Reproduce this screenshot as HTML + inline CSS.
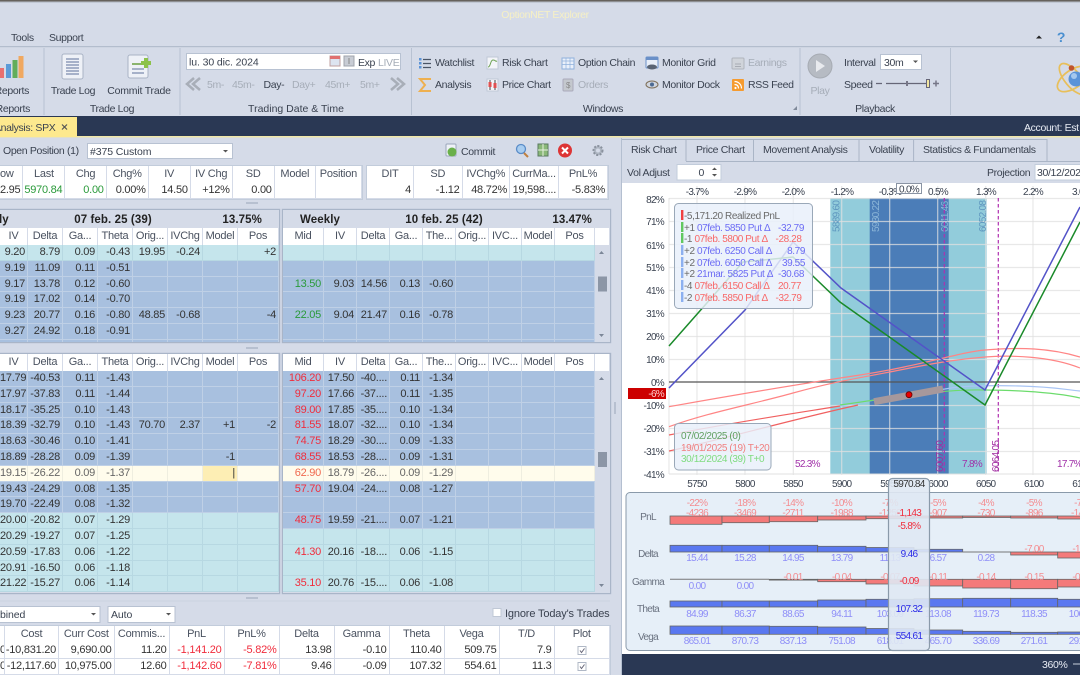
<!DOCTYPE html>
<html><head><meta charset="utf-8"><title>OptionNET Explorer</title>
<style>
html,body{margin:0;padding:0;background:#d5dbe8;overflow:hidden}
#a{position:relative;width:1080px;height:675px;overflow:hidden;background:#d5dbe8;font:11px "Liberation Sans",sans-serif;color:#333;letter-spacing:-.25px;filter:blur(.3px)}
#a svg.o{position:absolute;left:0;top:0}
svg text{font-family:"Liberation Sans",sans-serif;font-size:10.5px;fill:#3a4250;letter-spacing:-.35px}
svg .lg text{font-size:10px;letter-spacing:-.4px}
svg .lg2 text{font-size:10px;letter-spacing:-.7px}
.m{text-anchor:middle}.e{text-anchor:end}
.gy{fill:#a6adb8}.bd{font-weight:bold;fill:#222;font-size:11.5px;letter-spacing:.1px}
.p{position:absolute;background:#d5dbe8;box-shadow:0 0 0 1.2px #a9b5c8;overflow:hidden}
.r{display:grid;height:15.8px;box-sizing:border-box;border-bottom:1px solid #bfd0e6;color:#333}
.r p,.h p{margin:0;text-align:right;padding-right:2px;line-height:15px;height:100%;border-right:1px solid #bfd0e6;white-space:nowrap;overflow:hidden}
.h{display:grid;height:17px;background:#fff}
.h p{text-align:center;padding:0;line-height:17px;color:#4a5260;border-right:1px solid #d5dbe8}
.L .r,.L .h{grid-template-columns:28px 35px 35px 35px 35px 35px 35px 41px}
.R .r,.R .h{grid-template-columns:41px 33px 33px 33px 33px 33px 33px 33px 40px;width:312px}
.b{background:#a8c0df}.c{background:#c5e5ec}.y{background:#fffcec;color:#666}
.y p{border-color:#efeee0}.c p{border-color:#b7d8e2}.c{border-color:#b7d8e2}
.g{color:#2a9a3a}.d{color:#f02c3c}
.T{position:absolute;background:#fff;box-shadow:0 0 0 1px #c2ccdb}
.T .h p{border-right:1px solid #d5dbe8}
.T .r{height:16px;background:#fff;border-bottom:1px solid #d5dbe8;font-size:11px}
.T .r p{border-color:#d5dbe8;line-height:15px}
</style></head><body><div id="a">

<!-- top summary tables -->
<div class="T" style="left:0;top:166px;width:362px;height:33px"><div class="h" style="grid-template-columns:23.4px 42px 41.3px 42px 42px 42px 42px 41.2px 46px"><p style="text-align:left">ow<p>Last<p>Chg<p>Chg%<p>IV<p>IV Chg<p>SD<p>Model<p>Position</div>
<div class="r" style="grid-template-columns:23.4px 42px 41.3px 42px 42px 42px 42px 41.2px 46px"><p>2.95<p class="g">5970.84<p class="g">0.00<p>0.00%<p>14.50<p>+12%<p>0.00<p><p></div></div>
<div class="T" style="left:367px;top:166px;width:241px;height:33px"><div class="h" style="grid-template-columns:47px 48.5px 47.5px 49px 49px"><p>DIT<p>SD<p>IVChg%<p>CurrMa...<p>PnL%</div>
<div class="r" style="grid-template-columns:47px 48.5px 47.5px 49px 49px"><p>4<p>-1.12<p>48.72%<p>19,598....<p>-5.83%</div></div>

<!-- upper left grid -->
<div class="p L" style="left:0;top:210px;width:279px;height:132px"><div style="height:18px"></div>
<div class="h"><p>IV<p>Delta<p>Ga...<p>Theta<p>Orig...<p>IVChg<p>Model<p>Pos</div>
<div class="r c"><p>9.20<p>8.79<p>0.09<p>-0.43<p>19.95<p>-0.24<p><p>+2</div>
<div class="r b"><p>9.19<p>11.09<p>0.11<p>-0.51<p><p><p><p></div>
<div class="r b"><p>9.17<p>13.78<p>0.12<p>-0.60<p><p><p><p></div>
<div class="r b"><p>9.19<p>17.02<p>0.14<p>-0.70<p><p><p><p></div>
<div class="r b"><p>9.23<p>20.77<p>0.16<p>-0.80<p>48.85<p>-0.68<p><p>-4</div>
<div class="r b"><p>9.27<p>24.92<p>0.18<p>-0.91<p><p><p><p></div>
<div class="r b"><p><p><p><p><p><p><p><p></div></div>

<!-- upper right grid -->
<div class="p R" style="left:283px;top:210px;width:327px;height:132px"><div style="height:18px"></div>
<div class="h" style="width:327px;grid-template-columns:41px 33px 33px 33px 33px 33px 33px 33px 40px 15px"><p>Mid<p>IV<p>Delta<p>Ga...<p>The...<p>Orig...<p>IVC...<p>Model<p>Pos<p></div>
<div class="r c"><p><p><p><p><p><p><p><p><p></div>
<div class="r b"><p><p><p><p><p><p><p><p><p></div>
<div class="r b"><p class="g">13.50<p>9.03<p>14.56<p>0.13<p>-0.60<p><p><p><p></div>
<div class="r b"><p><p><p><p><p><p><p><p><p></div>
<div class="r b"><p class="g">22.05<p>9.04<p>21.47<p>0.16<p>-0.78<p><p><p><p></div>
<div class="r b"><p><p><p><p><p><p><p><p><p></div>
<div class="r b"><p><p><p><p><p><p><p><p><p></div></div>

<!-- lower left grid -->
<div class="p L" style="left:0;top:354px;width:279px;height:238.5px">
<div class="h"><p>IV<p>Delta<p>Ga...<p>Theta<p>Orig...<p>IVChg<p>Model<p>Pos</div>
<div class="r b"><p>17.79<p>-40.53<p>0.11<p>-1.43<p><p><p><p></div>
<div class="r b"><p>17.97<p>-37.83<p>0.11<p>-1.44<p><p><p><p></div>
<div class="r b"><p>18.17<p>-35.25<p>0.10<p>-1.43<p><p><p><p></div>
<div class="r b"><p>18.39<p>-32.79<p>0.10<p>-1.43<p>70.70<p>2.37<p>+1<p>-2</div>
<div class="r b"><p>18.63<p>-30.46<p>0.10<p>-1.41<p><p><p><p></div>
<div class="r b"><p>18.89<p>-28.28<p>0.09<p>-1.39<p><p><p>-1<p></div>
<div class="r y"><p>19.15<p>-26.22<p>0.09<p>-1.37<p><p><p style="background:#fdeeb4;color:#333">|<p></div>
<div class="r b"><p>19.43<p>-24.29<p>0.08<p>-1.35<p><p><p><p></div>
<div class="r b"><p>19.70<p>-22.49<p>0.08<p>-1.32<p><p><p><p></div>
<div class="r c"><p>20.00<p>-20.82<p>0.07<p>-1.29<p><p><p><p></div>
<div class="r c"><p>20.29<p>-19.27<p>0.07<p>-1.25<p><p><p><p></div>
<div class="r c"><p>20.59<p>-17.83<p>0.06<p>-1.22<p><p><p><p></div>
<div class="r c"><p>20.91<p>-16.50<p>0.06<p>-1.18<p><p><p><p></div>
<div class="r c"><p>21.22<p>-15.27<p>0.06<p>-1.14<p><p><p><p></div></div>

<!-- lower right grid -->
<div class="p R" style="left:283px;top:354px;width:327px;height:238.5px">
<div class="h" style="width:327px;grid-template-columns:41px 33px 33px 33px 33px 33px 33px 33px 40px 15px"><p>Mid<p>IV<p>Delta<p>Ga...<p>The...<p>Orig...<p>IVC...<p>Model<p>Pos<p></div>
<div class="r b"><p class="d">106.20<p>17.50<p>-40....<p>0.11<p>-1.34<p><p><p><p></div>
<div class="r b"><p class="d">97.20<p>17.66<p>-37....<p>0.11<p>-1.35<p><p><p><p></div>
<div class="r b"><p class="d">89.00<p>17.85<p>-35....<p>0.10<p>-1.34<p><p><p><p></div>
<div class="r b"><p class="d">81.55<p>18.07<p>-32....<p>0.10<p>-1.34<p><p><p><p></div>
<div class="r b"><p class="d">74.75<p>18.29<p>-30....<p>0.09<p>-1.33<p><p><p><p></div>
<div class="r b"><p class="d">68.55<p>18.53<p>-28....<p>0.09<p>-1.31<p><p><p><p></div>
<div class="r y"><p style="color:#f06a50">62.90<p>18.79<p>-26....<p>0.09<p>-1.29<p><p><p><p></div>
<div class="r b"><p class="d">57.70<p>19.04<p>-24....<p>0.08<p>-1.27<p><p><p><p></div>
<div class="r b"><p><p><p><p><p><p><p><p><p></div>
<div class="r b"><p class="d">48.75<p>19.59<p>-21....<p>0.07<p>-1.21<p><p><p><p></div>
<div class="r c"><p><p><p><p><p><p><p><p><p></div>
<div class="r c"><p class="d">41.30<p>20.16<p>-18....<p>0.06<p>-1.15<p><p><p><p></div>
<div class="r c"><p><p><p><p><p><p><p><p><p></div>
<div class="r c"><p class="d">35.10<p>20.76<p>-15....<p>0.06<p>-1.08<p><p><p><p></div></div>

<!-- bottom table -->
<div class="T" style="left:0;top:625.5px;width:610px;height:50px">
<div class="h" style="height:17.5px;grid-template-columns:5px 54px 55.5px 55px 55px 55px 55px 55px 55px 55px 55px 55.5px"><p><p>Cost<p>Curr Cost<p>Commis...<p>PnL<p>PnL%<p>Delta<p>Gamma<p>Theta<p>Vega<p>T/D<p>Plot</div>
<div class="r" style="grid-template-columns:5px 54px 55.5px 55px 55px 55px 55px 55px 55px 55px 55px 55.5px"><p style="padding:0">0<p>-10,831.20<p>9,690.00<p>11.20<p class="d">-1,141.20<p class="d">-5.82%<p>13.98<p>-0.10<p>110.40<p>509.75<p>7.9<p></div>
<div class="r" style="grid-template-columns:5px 54px 55.5px 55px 55px 55px 55px 55px 55px 55px 55px 55.5px"><p style="padding:0">0<p>-12,117.60<p>10,975.00<p>12.60<p class="d">-1,142.60<p class="d">-7.81%<p>9.46<p>-0.09<p>107.32<p>554.61<p>11.3<p></div></div>

<svg class="o" width="1080" height="675" viewBox="0 0 1080 675">
<!-- top strip -->
<rect width="1080" height="1.6" fill="#66625c"/><rect y="1.6" width="1080" height="1" fill="#b4bbc8"/>
<text x="545" y="18" class="m" style="fill:#f6f0c4">OptionNET Explorer</text>
<text x="11" y="41">Tools</text><text x="49" y="41">Support</text>
<path d="M1036 38.5h6l-3-3z" fill="#222"/>
<text x="1061" y="42" class="m" style="fill:#4a8fd0;font-weight:bold;font-size:14px">?</text>
<rect y="46" width="1080" height="1.2" fill="#b3bdcd"/>
<g stroke="#b8c2d2"><path d="M44 48v67M180 48v67M411.5 48v67M800 48v67M950.5 48v67"/></g>

<!-- reports icon -->
<rect x="0" y="68" width="4" height="10" fill="#e87070"/><rect x="6" y="64" width="5" height="14" fill="#5b9bd8"/><rect x="12.500" y="60" width="5" height="18" fill="#62ad5a"/><rect x="18.500" y="56" width="5" height="22" fill="#f0a860"/>
<text x="29" y="94" class="e">Reports</text><text x="30" y="112" class="e">Reports</text>
<!-- trade log icon -->
<rect x="62" y="54" width="21" height="25" rx="2" fill="#eef1f7" stroke="#a9b3c5"/><path d="M66 59h13M66 62h13M66 65h13M66 68h13M66 71h13M66 74h13" stroke="#a6b1c9" stroke-width="2"/>
<text x="73" y="94" class="m">Trade Log</text>
<rect x="128" y="55" width="20" height="23" rx="2" fill="#eef1f7" stroke="#a9b3c5"/><path d="M132 64h11" stroke="#6aa040" stroke-width="1.5"/><path d="M132 69h12M132 73h12" stroke="#a6b1c9" stroke-width="2"/><path d="M146 58v10M141 63h10" stroke="#8cc24a" stroke-width="4"/>
<text x="139" y="94" class="m" style="letter-spacing:-.2px">Commit Trade</text>
<text x="112" y="112" class="m">Trade Log</text>

<!-- date row -->
<rect x="186.500" y="53.500" width="214" height="16" fill="#fff" stroke="#b8c2d2"/>
<text x="189" y="65.500" style="letter-spacing:-.1px">lu. 30 dic. 2024</text>
<rect x="330" y="56" width="10" height="10" fill="#dde4f0" stroke="#c0a0a0"/><rect x="330" y="56" width="10" height="3" fill="#e07070"/>
<rect x="344" y="56" width="10" height="10" fill="#c8ccd4" stroke="#a0a4ac"/><path d="M349 58v6" stroke="#888"/>
<text x="358" y="66">Exp</text><text x="378" y="66" class="gy">LIVE</text>
<path d="M200 78l-7 6 7 6M194 78l-7 6 7 6" fill="none" stroke="#a8aeb8" stroke-width="2.500"/>
<path d="M391 78l7 6-7 6M397 78l7 6-7 6" fill="none" stroke="#a8aeb8" stroke-width="2.500"/>
<text x="207" y="88" class="gy">5m-</text><text x="232" y="88" class="gy">45m-</text><text x="263.500" y="88">Day-</text><text x="292" y="88" class="gy">Day+</text><text x="325" y="88" class="gy">45m+</text><text x="360" y="88" class="gy">5m+</text>
<text x="296" y="112" class="m" style="letter-spacing:0">Trading Date &amp; Time</text>

<!-- windows -->
<g fill="#5b93d6"><rect x="419" y="58" width="2.500" height="2.500"/><rect x="419" y="62" width="2.500" height="2.500"/><rect x="419" y="66" width="2.500" height="2.500"/></g><path d="M423 59.500h8M423 63.500h8M423 67.500h8" stroke="#4a5566" stroke-width="1.300"/>
<text x="435" y="66">Watchlist</text>
<path d="M431 79h-11l5 6-5 6h11" fill="none" stroke="#eeb050" stroke-width="2"/>
<text x="435" y="88">Analysis</text>
<rect x="487" y="57" width="11" height="12" fill="#f3f5f9" stroke="#c0c8d6"/><path d="M488 67c3 0 2-7 5-7s2 2 4 1" fill="none" stroke="#6aa050"/>
<text x="502" y="66">Risk Chart</text>
<rect x="487" y="79" width="11" height="12" fill="#f3f5f9" stroke="#c0c8d6"/><path d="M490 80v10M495 80v10" stroke="#444"/><rect x="488.500" y="82" width="3" height="5" fill="#e05050"/><rect x="493.500" y="83" width="3" height="5" fill="#e05050"/>
<text x="502" y="88">Price Chart</text>
<rect x="562" y="58" width="12" height="11" fill="#eaf0fa" stroke="#8fb0dc"/><path d="M562 61h12M562 64.500h12M566 58v11M570 58v11" stroke="#8fb0dc" stroke-width=".7"/>
<text x="578" y="66">Option Chain</text>
<rect x="563" y="79" width="10" height="12" rx="1" fill="#c4c8ce" stroke="#aab"/><text x="568" y="88" class="m" style="font-size:8px;fill:#888">$</text>
<text x="578" y="88" class="gy">Orders</text>
<rect x="646" y="57" width="12" height="11" rx="1" fill="#e8eef8" stroke="#6a90c8"/><rect x="646" y="57" width="12" height="3" fill="#6a90c8"/><ellipse cx="652" cy="67" rx="5" ry="2.500" fill="#5a6474"/>
<text x="662" y="66">Monitor Grid</text>
<ellipse cx="652" cy="84.500" rx="6" ry="3.500" fill="#cfd5df" stroke="#7c6c54"/><circle cx="652" cy="84.500" r="2" fill="#4c6a92"/>
<text x="662" y="88">Monitor Dock</text>
<rect x="732" y="58" width="12" height="11" rx="1" fill="#d0d4da" stroke="#b0b4bc"/><path d="M735 64h6M735 66.500h6" stroke="#a8acb4"/>
<text x="748" y="66" class="gy">Earnings</text>
<rect x="732" y="79" width="12" height="12" rx="1" fill="#f59b30"/><path d="M734.500 81.500c4 0 7 3 7 7M734.500 84.500c2.500 0 4 1.500 4 4" fill="none" stroke="#fff" stroke-width="1.200"/><circle cx="735.500" cy="88" r="1.100" fill="#fff"/>
<text x="748" y="88">RSS Feed</text>
<text x="603" y="112" class="m">Windows</text>
<path d="M793 110h4v-4z" fill="#808a9a"/>

<!-- playback -->
<circle cx="820" cy="66" r="12" fill="#b6bbc3" stroke="#a6abb3"/><path d="M816 60l9 6-9 6z" fill="#e8eaee"/>
<text x="820" y="94" class="m gy">Play</text>
<text x="844" y="66">Interval</text><rect x="880.500" y="54.500" width="41" height="15" fill="#fff" stroke="#b8c2d2"/><text x="884" y="66">30m</text><path d="M913 60.500h5l-2.500 2.500z" fill="#555"/>
<text x="844" y="88">Speed</text><path d="M876 83.500h6M886 83.500h41" stroke="#667" stroke-width="1.300"/><rect x="906" y="81" width="2" height="5" fill="#778"/><rect x="926.500" y="79.500" width="3" height="8" fill="#f2e6a0" stroke="#667"/><path d="M933 83.500h6M936 80.500v6" stroke="#778" stroke-width="1.500"/>
<text x="875" y="112" class="m">Playback</text>

<!-- atom logo -->
<g fill="none" stroke="#e8bf5a" stroke-width="1.700"><ellipse cx="1073" cy="79" rx="18" ry="9" transform="rotate(-35 1073 79)"/><ellipse cx="1073" cy="79" rx="19" ry="8" transform="rotate(50 1073 79)"/></g>
<circle cx="1076" cy="79" r="7.500" fill="#5a93d8"/><circle cx="1074" cy="76" r="3" fill="#a5c8ee"/><circle cx="1071.500" cy="68" r="2.800" fill="#c0542c"/>

<!-- dark bar -->
<rect y="116" width="1080" height="20" fill="#2a3854"/><rect y="136" width="1080" height="1.500" fill="#f0e6a8"/>
<rect x="0" y="117" width="77" height="20" fill="#fde98e"/>
<text x="-6" y="131">Analysis: SPX</text>
<path d="M62 124.500l5 5M67 124.500l-5 5" stroke="#555" stroke-width="1.200"/>
<text x="1024" y="131" style="fill:#e8ecf4">Account: Est</text>

<!-- left toolbar -->
<text x="3" y="154">Open Position (1)</text>
<rect x="87.500" y="143.500" width="145" height="15" fill="#fff" stroke="#b8c2d2"/><text x="90" y="155" style="letter-spacing:-.1px">#375 Custom</text><path d="M223 150h5l-2.500 2.500z" fill="#555"/>
<rect x="446" y="144" width="10" height="12" rx="1" fill="#eef1f7" stroke="#9aa6ba"/><circle cx="452" cy="152" r="4.500" fill="#6ab04a"/>
<text x="461" y="155">Commit</text>
<circle cx="521" cy="149" r="4.500" fill="#a8cdf0" stroke="#5a8cc8" stroke-width="1.300"/><path d="M524 153l4 4" stroke="#c08040" stroke-width="2"/>
<rect x="538" y="144" width="10" height="12" fill="#8ab878" stroke="#5a7a60"/><path d="M543 144v12M538 150h10" stroke="#e8f0e0"/>
<circle cx="565" cy="150.500" r="7" fill="#dd3535"/><path d="M562 147.500l6 6M568 147.500l-6 6" stroke="#fff" stroke-width="2"/>
<circle cx="598" cy="150.500" r="4.500" fill="#aeb6c2" stroke="#8a929e" stroke-width="2" stroke-dasharray="2 1.400"/><circle cx="598" cy="150.500" r="2" fill="#d5dbe8"/>

<!-- grid titles -->
<text x="-1" y="223" class="bd">ly</text><text x="113" y="223" class="bd m">07 feb. 25 (39)</text><text x="262" y="223" class="bd e">13.75%</text>
<text x="300" y="223" class="bd">Weekly</text><text x="444" y="223" class="bd m">10 feb. 25 (42)</text><text x="592" y="223" class="bd e">13.47%</text>
<!-- scrollbars -->
<path d="M599 254h5l-2.500-3z M599 334h5l-2.500 3z M599 380h5l-2.500-3z M599 584h5l-2.500 3z" fill="#7c8798"/>
<rect x="598" y="276.500" width="9" height="15" fill="#8c96a6"/><rect x="598" y="452" width="9" height="15" fill="#8c96a6"/>
<g fill="#a4aec0"><rect x="246" y="202" width="12" height="2" opacity=".6"/><rect x="246" y="347" width="12" height="2" opacity=".6"/><rect x="246" y="597" width="12" height="2" opacity=".6"/><rect x="614" y="402" width="2" height="12" opacity=".6"/></g>
<rect x="0" y="600.500" width="610" height="1" fill="#ccd3e0"/>

<!-- bottom toolbar -->
<rect x="-2" y="606.500" width="102" height="16" fill="#fff" stroke="#b8c2d2"/><text x="0" y="618" style="letter-spacing:-.1px">bined</text><path d="M91 613h5l-2.500 2.500z" fill="#555"/>
<rect x="108" y="606.500" width="67" height="16" fill="#fff" stroke="#b8c2d2"/><text x="111" y="618" style="letter-spacing:-.1px">Auto</text><path d="M166 613h5l-2.500 2.500z" fill="#555"/>
<rect x="493" y="608.500" width="8" height="8" fill="#fff" stroke="#c0c8d6"/><text x="505" y="617" style="font-size:11px;letter-spacing:-.15px">Ignore Today's Trades</text>
<rect x="578" y="646.500" width="8" height="8" fill="#fff" stroke="#b0b8c6"/><path d="M580 650.500l1.500 2 3-4" fill="none" stroke="#667"/>
<rect x="578" y="662.500" width="8" height="8" fill="#fff" stroke="#b0b8c6"/><path d="M580 666.500l1.500 2 3-4" fill="none" stroke="#667"/>

<!-- right tabs -->
<rect x="621" y="138" width="459" height="45" fill="#d5dbe8"/><path d="M621.500 138v537" stroke="#b4bfd0"/>
<path d="M622 139.500h64V161M686 139.500h67.500V161M753.500 139.500h105.500V161M859 139.500h54.600V161M913.600 139.500h133.400V161M686 161.500h394" fill="none" stroke="#aab5c6"/>
<text x="631" y="153">Risk Chart</text><text x="696" y="153">Price Chart</text><text x="763" y="153">Movement Analysis</text><text x="869" y="153">Volatility</text><text x="923" y="153">Statistics &amp; Fundamentals</text>
<text x="627" y="176">Vol Adjust</text><rect x="677" y="164.500" width="44" height="15.500" fill="#fff" stroke="#c2ccdb"/><text x="704" y="176" class="e">0</text><path d="M712 170h5l-2.500-2.500zM712 174h5l-2.500 2.500z" fill="#555"/>
<text x="987" y="176">Projection</text><rect x="1035" y="164.500" width="50" height="15.500" fill="#fff" stroke="#c2ccdb"/><text x="1037" y="176">30/12/202</text>

<!-- chart bg -->
<rect x="622" y="183" width="458" height="471" fill="#fff"/>
<rect x="830.300" y="198" width="156.400" height="276" fill="#92ccdb"/>
<rect x="869.700" y="198" width="79" height="276" fill="#4b7db8"/>
<g stroke="#e0e0e0" stroke-opacity=".75" stroke-width="1.200"><path d="M669 198.500h411M669 221.500h411M669 244.500h411M669 267.500h411M669 290.500h411M669 313.500h411M669 336.500h411M669 359.500h411M669 405.500h411M669 428.500h411M669 451.500h411M669 474h411"/><path d="M697 186v289M745 186v289M793.300 186v289M841.700 186v289M889.700 186v289M937.700 186v289M985.700 186v289M1033 186v289"/><path d="M669 198v276"/></g>
<g class="lg2"><text x="664" y="203" class="e">82%</text><text x="664" y="225" class="e">71%</text><text x="664" y="249" class="e">61%</text><text x="664" y="271" class="e">51%</text><text x="664" y="294" class="e">41%</text><text x="664" y="317" class="e">31%</text><text x="664" y="340" class="e">20%</text><text x="664" y="363" class="e">10%</text><text x="664" y="386" class="e">0%</text><text x="664" y="409" class="e">-10%</text><text x="664" y="432" class="e">-20%</text><text x="664" y="455" class="e">-31%</text><text x="664" y="478" class="e">-41%</text></g>
<rect x="628" y="388" width="38" height="11" fill="#cc0000"/><g class="lg2"><text x="664" y="397" class="e" style="fill:#ffd0d0">-6%</text>
<text x="697" y="195" class="m">-3.7%</text><text x="745" y="195" class="m">-2.9%</text><text x="793" y="195" class="m">-2.0%</text><text x="842" y="195" class="m">-1.2%</text><text x="890" y="195" class="m">-0.3%</text><text x="938" y="195" class="m">0.5%</text><text x="986" y="195" class="m">1.3%</text><text x="1033" y="195" class="m">2.2%</text><text x="1082" y="195" class="m">3.0%</text></g>
<rect x="896.500" y="183.500" width="25" height="10" fill="#fff" stroke="#8a94a4"/><g class="lg2"><text x="909" y="192.500" class="m">0.0%</text>
<text transform="translate(839.500,232) rotate(-90)" style="fill:#5f97bf">5889.60</text><text transform="translate(879,232) rotate(-90)" style="fill:#8cb6d8">5930.22</text><text transform="translate(948,232) rotate(-90)" style="fill:#8cb6d8">6011.46</text><text transform="translate(986,232) rotate(-90)" style="fill:#5f97bf">6052.08</text></g>
<!-- curves -->
<path d="M669 382H1080" stroke="#555" stroke-width="1.200"/>
<path d="M944.300 198V474M998.300 198V474" stroke="#b030b0" stroke-width="1.200" stroke-dasharray="3.500 2.500"/>
<g class="lg2"><text transform="translate(943,472) rotate(-90)" style="fill:#a02ca0">6007.60</text><text transform="translate(999,472) rotate(-90)" style="fill:#a02ca0">6064.05</text></g>
<g fill="none" stroke-width="1.200"><path d="M669 406.700C740 394 800 384 860 375S960 352 985 350C1020 347 1050 348 1080 357" stroke="#ff8585"/><path d="M669 426.700C710 412 750 405 793 393S860 378 900 370S960 359 985 357C1010 355 1050 356 1080 368" stroke="#ff8585"/><path d="M669 435C730 423 790 414 840 406" stroke="#f06060"/><path d="M669 451C720 440 790 420 858 405" stroke="#f06060"/><path d="M840 406C880 399 920 392 945 389C960 386 985 385 1020 386S1060 389 1080 391" stroke="#a8c4f4"/><path d="M840 405C870 401 910 394 940 391.700S970 390 985 390S1050 391 1080 398" stroke="#6cdc6c"/></g>
<path d="M874 401.700L943 389" stroke="#a6989c" stroke-width="7" fill="none"/>
<path d="M669 388L745 310L793 242L841 288L985 390L1080 207" fill="none" stroke="#5353c8" stroke-width="1.500"/>
<path d="M669 346L743 262L793 257L840 302L985 405L1080 222" fill="none" stroke="#1a8a2a" stroke-width="1.500"/>
<circle cx="909" cy="394.700" r="3" fill="#e80000" stroke="#600" stroke-width=".8"/>
<g class="lg2"><text x="795" y="467" style="fill:#a030a8">52.3%</text><text x="962" y="467" style="fill:#a030a8">7.8%</text><text x="1057" y="467" style="fill:#a030a8">17.7%</text></g>
<!-- legend -->
<rect x="674.500" y="203.500" width="138" height="105" rx="4" fill="#e8f0fa" fill-opacity=".84" stroke="#9aa8b8"/>
<g><rect x="681" y="210" width="2.400" height="10" fill="#f04040"/><rect x="681" y="222" width="2.400" height="10" fill="#60c860"/><rect x="681" y="233" width="2.400" height="10" fill="#60c860"/><rect x="681" y="245" width="2.400" height="10" fill="#8cb0f0"/><rect x="681" y="257" width="2.400" height="10" fill="#8cb0f0"/><rect x="681" y="268" width="2.400" height="10" fill="#8cb0f0"/><rect x="681" y="280" width="2.400" height="10" fill="#8cb0f0"/><rect x="681" y="292" width="2.400" height="10" fill="#8cb0f0"/></g>
<g class="lg"><text x="684" y="219" style="fill:#6a6a6a">-5,171.20 Realized PnL</text>
<text x="684" y="231" style="fill:#6a6a6a">+1 <tspan style="fill:#6c6cf4">07feb. 5850 Put Δ</tspan></text><text x="804" y="231" class="e" style="fill:#6c6cf4">-32.79</text>
<text x="684" y="242" style="fill:#6a6a6a">-1 <tspan style="fill:#f86868">07feb. 5800 Put Δ</tspan></text><text x="801.500" y="242" class="e" style="fill:#f86868">-28.28</text>
<text x="684" y="254" style="fill:#6a6a6a">+2 <tspan style="fill:#6c6cf4">07feb. 6250 Call Δ</tspan></text><text x="805" y="254" class="e" style="fill:#6c6cf4">8.79</text>
<text x="684" y="266" style="fill:#6a6a6a">+2 <tspan style="fill:#6c6cf4">07feb. 6050 Call Δ</tspan></text><text x="805" y="266" class="e" style="fill:#6c6cf4">39.55</text>
<text x="684" y="277" style="fill:#6a6a6a">+2 <tspan style="fill:#6c6cf4">21mar. 5825 Put Δ</tspan></text><text x="804" y="277" class="e" style="fill:#6c6cf4">-30.68</text>
<text x="684" y="289" style="fill:#6a6a6a">-4 <tspan style="fill:#f86868">07feb. 6150 Call Δ</tspan></text><text x="801" y="289" class="e" style="fill:#f86868">20.77</text>
<text x="684" y="301" style="fill:#6a6a6a">-2 <tspan style="fill:#f86868">07feb. 5850 Put Δ</tspan></text><text x="801.500" y="301" class="e" style="fill:#f86868">-32.79</text></g>
<rect x="674.500" y="423.500" width="96.500" height="46.500" rx="4" fill="#e8f0fa" fill-opacity=".84" stroke="#9aa8b8"/>
<g class="lg"><text x="681" y="439" style="fill:#5f9f5f">07/02/2025 (0)</text><text x="681" y="451" style="fill:#f08080">19/01/2025 (19) T+20</text><text x="681" y="462" style="fill:#80dc80">30/12/2024 (39) T+0</text></g>

<!-- x axis -->
<g class="lg2"><text x="697" y="487" class="m">5750</text><text x="745" y="487" class="m">5800</text><text x="793" y="487" class="m">5850</text><text x="841.700" y="487" class="m">5900</text><text x="890" y="487" class="m">5950</text><text x="938" y="487" class="m">6000</text><text x="985.700" y="487" class="m">6050</text><text x="1033.700" y="487" class="m">6100</text><text x="1082" y="487" class="m">6150</text></g>

<!-- greeks panel -->
<rect x="626" y="492.500" width="470" height="158" rx="4" fill="#e6eff8" stroke="#8a9aaa"/>
<g class="lg2"><text x="648" y="520" class="m" style="fill:#6a7280">PnL</text><text x="648" y="557" class="m" style="fill:#6a7280">Delta</text><text x="648" y="585" class="m" style="fill:#6a7280">Gamma</text><text x="648" y="612" class="m" style="fill:#6a7280">Theta</text><text x="648" y="640" class="m" style="fill:#6a7280">Vega</text></g>
<g stroke="#666" stroke-width=".8" fill="#f47a7a">
<rect x="670" y="516" width="52" height="8.300"/><rect x="722" y="516" width="47.300" height="6.700"/><rect x="769.300" y="516" width="48.400" height="5.700"/><rect x="817.700" y="516" width="48.300" height="4"/><rect x="866" y="516" width="48" height="2.700"/><rect x="914" y="516" width="48.700" height="2"/><rect x="962.700" y="516" width="48" height="1.500"/><rect x="1010.700" y="516" width="47" height="2"/><rect x="1057.700" y="516" width="30" height="3"/>
</g>
<g stroke="#666" stroke-width=".8" fill="#5a78f0">
<rect x="670" y="545.300" width="52" height="6.700"/><rect x="722" y="545.300" width="47.300" height="6.700"/><rect x="769.300" y="545.300" width="48.400" height="6.700"/><rect x="817.700" y="546.300" width="48.300" height="5.700"/><rect x="866" y="547.500" width="48" height="4.500"/><rect x="914" y="549.300" width="48.700" height="2.700"/>
<rect x="670" y="601" width="52" height="6"/><rect x="722" y="601" width="47.300" height="6"/><rect x="769.300" y="601" width="48.400" height="6"/><rect x="817.700" y="600" width="48.300" height="7"/><rect x="866" y="599.300" width="48" height="7.700"/><rect x="914" y="598.700" width="48.700" height="8.300"/><rect x="962.700" y="598.300" width="48" height="8.700"/><rect x="1010.700" y="598.300" width="47" height="8.700"/><rect x="1057.700" y="599.300" width="30" height="7.700"/>
<rect x="670" y="626" width="52" height="8.300"/><rect x="722" y="626" width="47.300" height="8.300"/><rect x="769.300" y="626.300" width="48.400" height="8"/><rect x="817.700" y="627" width="48.300" height="7.300"/><rect x="866" y="628.500" width="48" height="5.800"/><rect x="914" y="630" width="48.700" height="4.300"/><rect x="962.700" y="631.300" width="48" height="3"/><rect x="1010.700" y="632.300" width="47" height="2"/><rect x="1057.700" y="632" width="30" height="2.300"/>
</g>
<path d="M670 579.300h99M962.700 552h48" stroke="#777" fill="none"/>
<g stroke="#666" stroke-width=".8" fill="#f47a7a">
<rect x="1010.700" y="552" width="47" height="3"/><rect x="1057.700" y="552" width="30" height="6"/>
<rect x="769.300" y="579.300" width="48.400" height=".8"/><rect x="817.700" y="579.300" width="48.300" height="2.400"/><rect x="866" y="579.300" width="48" height="4.700"/><rect x="914" y="579.300" width="48.700" height="6.700"/><rect x="962.700" y="579.300" width="48" height="8.700"/><rect x="1010.700" y="579.300" width="47" height="9.400"/><rect x="1057.700" y="579.300" width="30" height="7.700"/>
</g>
<!-- greek values -->
<g class="lg2">
<text x="697" y="506" class="m" style="fill:#f48c90">-22%</text><text x="745" y="506" class="m" style="fill:#f48c90">-18%</text><text x="793" y="506" class="m" style="fill:#f48c90">-14%</text><text x="841.700" y="506" class="m" style="fill:#f48c90">-10%</text><text x="890" y="506" class="m" style="fill:#f48c90">-7%</text><text x="938" y="506" class="m" style="fill:#f48c90">-5%</text><text x="986" y="506" class="m" style="fill:#f48c90">-4%</text><text x="1034" y="506" class="m" style="fill:#f48c90">-5%</text><text x="1082" y="506" class="m" style="fill:#f48c90">-7%</text>
<text x="697" y="516" class="m" style="fill:#f48c90">-4236</text><text x="745" y="516" class="m" style="fill:#f48c90">-3469</text><text x="793" y="516" class="m" style="fill:#f48c90">-2711</text><text x="841.700" y="516" class="m" style="fill:#f48c90">-1988</text><text x="890" y="516" class="m" style="fill:#f48c90">-1259</text><text x="938" y="516" class="m" style="fill:#f48c90">-907</text><text x="986" y="516" class="m" style="fill:#f48c90">-730</text><text x="1034" y="516" class="m" style="fill:#f48c90">-896</text><text x="1082" y="516" class="m" style="fill:#f48c90">-1434</text>
<text x="1034" y="552" class="m" style="fill:#f48c90">-7.00</text><text x="1082" y="552" class="m" style="fill:#f48c90">-14.2</text>
<text x="793" y="580" class="m" style="fill:#f48c90">-0.01</text><text x="841.700" y="580" class="m" style="fill:#f48c90">-0.04</text><text x="890" y="580" class="m" style="fill:#f48c90">-0.07</text><text x="938" y="580" class="m" style="fill:#f48c90">-0.11</text><text x="986" y="580" class="m" style="fill:#f48c90">-0.14</text><text x="1034" y="580" class="m" style="fill:#f48c90">-0.15</text><text x="1082" y="580" class="m" style="fill:#f48c90">-0.13</text>
<text x="697" y="561" class="m" style="fill:#8e8ef8">15.44</text><text x="745" y="561" class="m" style="fill:#8e8ef8">15.28</text><text x="793" y="561" class="m" style="fill:#8e8ef8">14.95</text><text x="841.700" y="561" class="m" style="fill:#8e8ef8">13.79</text><text x="890" y="561" class="m" style="fill:#8e8ef8">11.13</text><text x="938" y="561" class="m" style="fill:#8e8ef8">6.57</text><text x="986" y="561" class="m" style="fill:#8e8ef8">0.28</text>
<text x="697" y="589" class="m" style="fill:#8e8ef8">0.00</text><text x="745" y="589" class="m" style="fill:#8e8ef8">0.00</text>
<text x="697" y="617" class="m" style="fill:#8e8ef8">84.99</text><text x="745" y="617" class="m" style="fill:#8e8ef8">86.37</text><text x="793" y="617" class="m" style="fill:#8e8ef8">88.65</text><text x="841.700" y="617" class="m" style="fill:#8e8ef8">94.11</text><text x="890" y="617" class="m" style="fill:#8e8ef8">103.09</text><text x="938" y="617" class="m" style="fill:#8e8ef8">113.08</text><text x="986" y="617" class="m" style="fill:#8e8ef8">119.73</text><text x="1034" y="617" class="m" style="fill:#8e8ef8">118.35</text><text x="1082" y="617" class="m" style="fill:#8e8ef8">106.15</text>
<text x="697" y="644" class="m" style="fill:#8e8ef8">865.01</text><text x="745" y="644" class="m" style="fill:#8e8ef8">870.73</text><text x="793" y="644" class="m" style="fill:#8e8ef8">837.13</text><text x="841.700" y="644" class="m" style="fill:#8e8ef8">751.08</text><text x="890" y="644" class="m" style="fill:#8e8ef8">618.01</text><text x="938" y="644" class="m" style="fill:#8e8ef8">465.70</text><text x="986" y="644" class="m" style="fill:#8e8ef8">336.69</text><text x="1034" y="644" class="m" style="fill:#8e8ef8">271.61</text><text x="1082" y="644" class="m" style="fill:#8e8ef8">291.42</text>
</g>
<!-- selected column -->
<rect x="888.500" y="478.500" width="41" height="172" rx="4" fill="#dfe8f3" fill-opacity=".9" stroke="#8a9aaa" stroke-width="1.200"/>
<g class="lg2"><text x="909" y="487" class="m" style="fill:#333">5970.84</text>
<text x="909" y="516" class="m" style="fill:#f02c3c">-1,143</text><text x="909" y="529" class="m" style="fill:#f02c3c">-5.8%</text>
<text x="909" y="557" class="m" style="fill:#2a2ae8">9.46</text><text x="909" y="584" class="m" style="fill:#f02c3c">-0.09</text><text x="909" y="612" class="m" style="fill:#2a2ae8">107.32</text><text x="909" y="639" class="m" style="fill:#2a2ae8">554.61</text></g>

<!-- bottom dark bar -->
<rect x="622" y="654" width="458" height="21" fill="#2a3854"/>
<text x="1042" y="668" style="fill:#e8ecf4">360%</text><path d="M1073 664h7" stroke="#c8d0dc"/>
</svg>
</div></body></html>
